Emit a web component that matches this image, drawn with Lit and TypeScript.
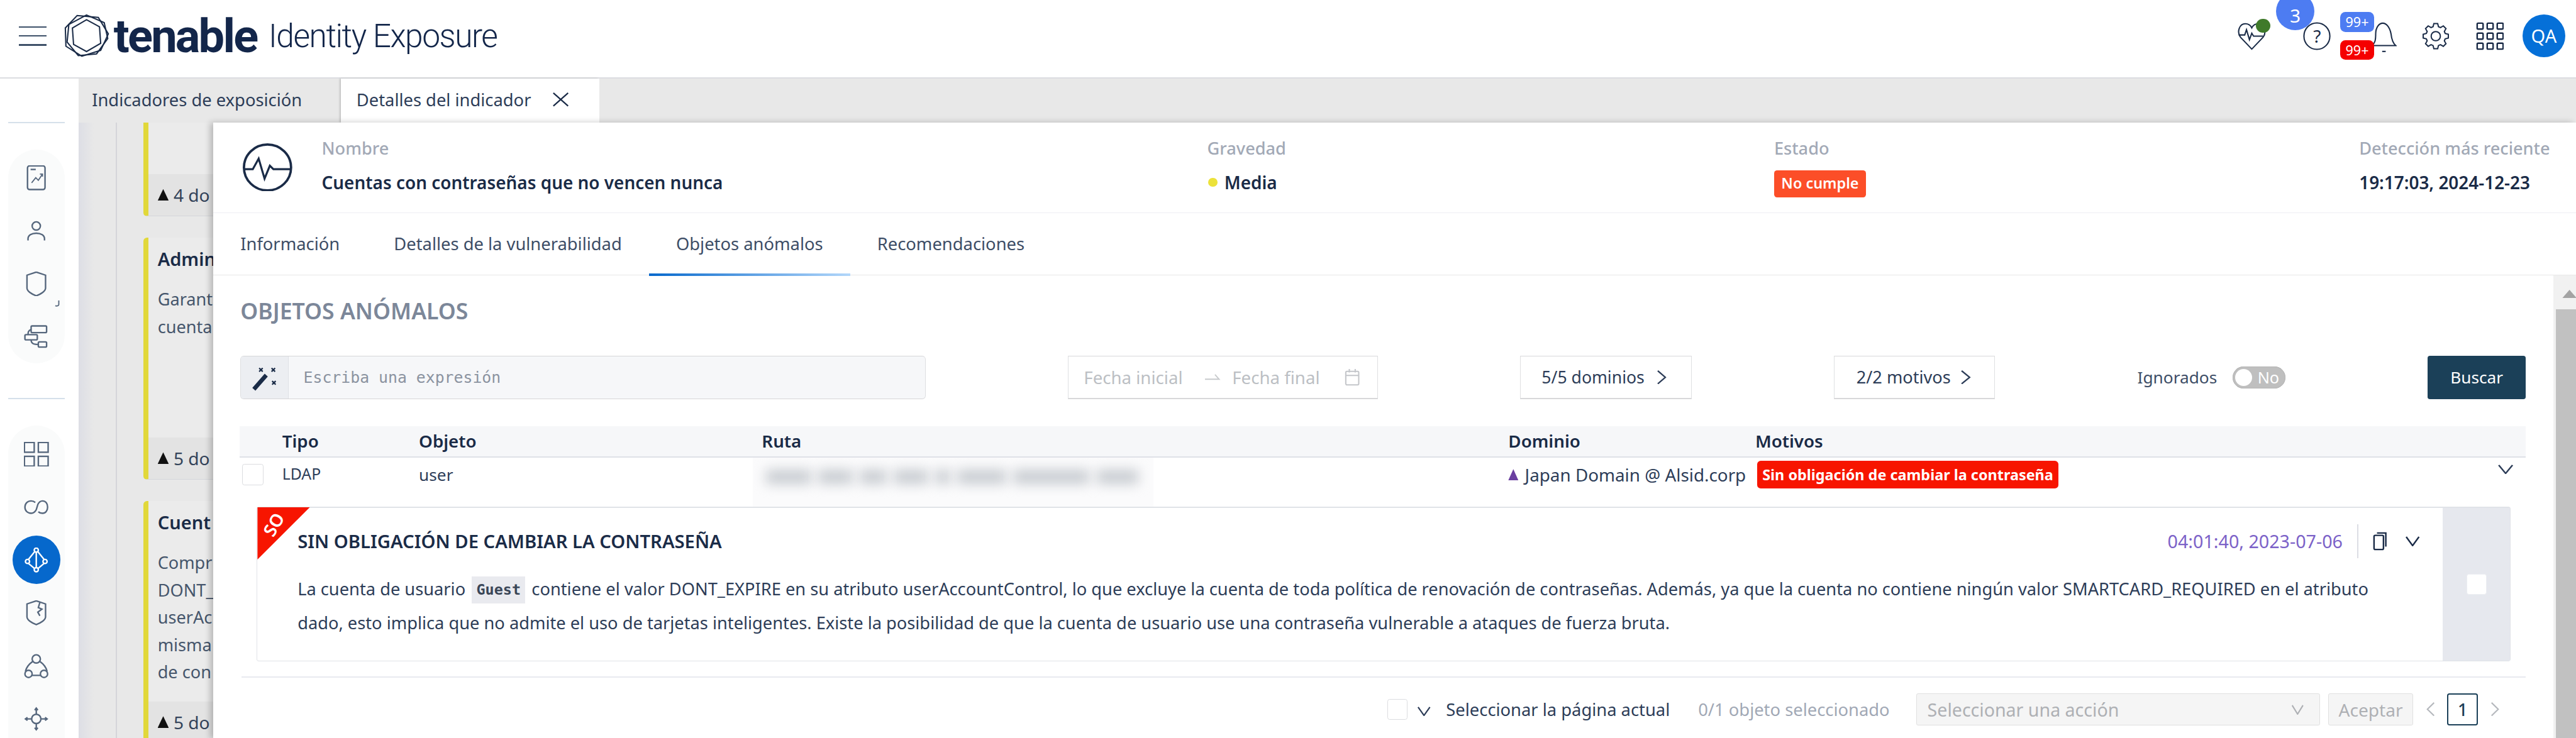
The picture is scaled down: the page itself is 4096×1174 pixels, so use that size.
import { LitElement, html, css, svg } from "lit";
import { customElement } from "lit/decorators.js";

const gearPath = (() => {
  const n = 8, cx = 24, cy = 24, R = 22, r = 17;
  const pts: string[] = [];
  for (let i = 0; i < n; i++) {
    const a = (i / n) * Math.PI * 2;
    const w = Math.PI / n;
    const p = (rad: number, t: number) => `${(cx + rad * Math.cos(t)).toFixed(1)} ${(cy + rad * Math.sin(t)).toFixed(1)}`;
    pts.push(p(r, a - w * 0.72), p(R, a - w * 0.38), p(R, a + w * 0.38), p(r, a + w * 0.72));
  }
  return "M" + pts.join("L") + "Z";
})();

const chev = (w: number, h: number, cls = "") =>
  html`<svg class=${cls} width=${w} height=${h} viewBox="0 0 24 16" preserveAspectRatio="none" fill="none" stroke="currentColor" stroke-width="2.4"><path d="M2 1l10 14L22 1" /></svg>`;
const right = (w: number, h: number) =>
  html`<svg width=${w} height=${h} viewBox="0 0 16 24" preserveAspectRatio="none" fill="none" stroke="currentColor" stroke-width="2.4"><path d="M2 1l12 11L2 23" /></svg>`;
const left = (w: number, h: number) =>
  html`<svg width=${w} height=${h} viewBox="0 0 16 24" preserveAspectRatio="none" fill="none" stroke="currentColor" stroke-width="2.4"><path d="M14 1L2 12l12 11" /></svg>`;

const sideIcons = [
  svg`<rect x="7" y="1" width="34" height="46" rx="4"/><path d="M13 8h10"/><path d="M15 34l8-10 5 5 8-12M31 17h5v5" stroke-width="2.2"/>`,
  svg`<circle cx="24" cy="14" r="8"/><path d="M8 42v-3c0-7 7-11 16-11s16 4 16 11v3"/>`,
  svg`<path d="M24 1l18 6v25c0 6-9 12-18 15C15 44 6 38 6 32V7z"/>`,
  svg`<rect x="14" y="3" width="30" height="13" rx="2"/><rect x="2" y="20" width="24" height="10" rx="2"/><rect x="28" y="34" width="16" height="10" rx="2"/><path d="M14 10C8 12 8 16 8 20M14 30c0 8 6 9 14 9"/>`,
  svg`<rect x="1" y="1" width="19" height="19"/><rect x="28" y="1" width="19" height="19"/><rect x="1" y="28" width="19" height="19"/><rect x="28" y="28" width="19" height="19"/>`,
  svg`<path d="M22 15c-2-2-5-3-8-3C7 12 2 17 2 24s5 12 12 12c5 0 8-3 10-7l3-10c2-4 4-7 9-7 6 0 10 5 10 12s-4 12-10 12c-3 0-6-1-8-3"/>`,
  svg`<circle cx="24" cy="5" r="4"/><circle cx="7" cy="27" r="4"/><circle cx="41" cy="27" r="4"/><circle cx="24" cy="43" r="4"/><path d="M21 8L9 23M27 8l12 15M9 31l12 10M39 31L27 41M24 9v30"/>`,
  svg`<path d="M24 1l18 6v25c0 6-9 12-18 15C15 44 6 38 6 32V7z"/><path d="M31 4l-3 10 7 3-8 6 4 7"/>`,
  svg`<circle cx="24" cy="10" r="8"/><circle cx="9" cy="39" r="7"/><circle cx="39" cy="39" r="7"/><path d="M17 15C10 20 5 26 3 34M31 15c7 5 12 11 14 19M16 42h16"/>`,
  svg`<circle cx="24" cy="24" r="9"/><path d="M24 3v12M24 33v12M3 24h12M33 24h12"/><path d="M21 7l3-4 3 4M21 41l3 4 3-4M7 21l-4 3 4 3M41 21l4 3-4 3"/>`,
];

const sideIcon = (i: number, active = false) => html`
  <span class="sic ${active ? "active" : ""}">
    <svg width="42" height="42" viewBox="0 0 48 48" fill="none" stroke="currentColor" stroke-width="2.9">${sideIcons[i]}</svg>
  </span>`;

@customElement("app-root")
export class AppRoot extends LitElement {
  static styles = css`
    :host { display: block; width: 4096px; height: 1174px; overflow: hidden; background: #fff; }
    * { box-sizing: border-box; }
    .page {
      zoom: 0.93687; width: 4372px; height: 1254px; display: flex; flex-direction: column; overflow: hidden;
      font-family: "Noto Sans", "Open Sans", sans-serif; font-size: 28px; color: #1a2b47; background: #fff;
    }
    .top { height: 133px; flex: none; display: flex; align-items: center; border-bottom: 3px solid #dcdde1; padding: 0 18px 9px 32px; overflow: hidden; }
    .burger { width: 47px; height: 33px; display: flex; flex-direction: column; justify-content: space-between; }
    .burger i { display: block; height: 3px; background: #3d5068; }
    .logo { margin-left: 30px; flex: none; display: block; }
    .brand { margin-left: 7px; font-family: "Roboto", sans-serif; font-weight: 700; font-size: 79px; letter-spacing: -3px; color: #13264a; line-height: 90px; margin-top: 2px; }
    .brand-sub { margin-left: 20px; font-family: "Roboto", sans-serif; font-weight: 300; font-size: 55px; letter-spacing: -1.6px; color: #13264a; line-height: 90px; margin-top: 2px; }
    .actions { margin-left: auto; display: flex; align-items: center; }
    .act { position: relative; display: block; height: 48px; flex: none; }
    .act svg { display: block; }
    .m-help { margin-left: 63px; }
    .m-bell { margin-left: 68px; }
    .m-gear { margin-left: 43px; }
    .m-apps { margin-left: 44px; }
    .dot { position: absolute; left: 31px; top: -5px; width: 24px; height: 24px; border-radius: 50%; background: #3f7a2a; }
    .count { position: absolute; left: -46px; top: -50px; width: 65px; height: 64px; border-radius: 50%; background: #4d7cf2; color: #fff; display: flex; align-items: center; justify-content: center; font-size: 32px; padding-top: 14px; }
    .help-q { position: absolute; inset: 0; display: flex; align-items: center; justify-content: center; font-size: 30px; color: #1a2b47; }
    .nb { position: absolute; left: -52px; width: 57px; height: 34px; border-radius: 9px; color: #fff; font-size: 23px; display: flex; align-items: center; justify-content: center; }
    .nb.blue { top: -17px; background: #4d7cf2; }
    .nb.red { top: 31px; background: #f50000; }
    .avatar { margin-left: 32px; width: 73px; height: 73px; border-radius: 50%; background: #0570d8; color: #fff; display: flex; align-items: center; justify-content: center; font-size: 31px; }

    .main { flex: 1; display: flex; min-height: 0; }
    .side { width: 133px; flex: none; padding: 74px 23px 0 14px; display: flex; flex-direction: column; overflow: hidden; }
    .rule { height: 2px; flex: none; background: #d5e0ea; }
    .pill { position: relative; flex: none; background: #fafbfb; border-radius: 48px; padding-top: 3px; margin-top: 45px; display: grid; grid-auto-rows: 90px; justify-items: center; align-items: center; }
    .pill.one { margin-bottom: 59px; }
    .pill.two { border-radius: 48px 48px 0 0; padding-bottom: 40px; }
    .sic { width: 82px; height: 82px; display: flex; align-items: center; justify-content: center; color: #56677d; border-radius: 50%; }
    .sic.active { background: #0668cc; color: #fff; }
    .corner { position: absolute; left: 78px; top: 255px; }

    .content { flex: 1; min-width: 0; position: relative; display: flex; flex-direction: column; }
    .tabbar { height: 75px; flex: none; background: #e8e8e8; display: flex; }
    .ttab { display: flex; align-items: center; padding-bottom: 3px; white-space: nowrap; font-size: 29.2px; color: #2d3d58; }
    .ttab.off { width: 446px; padding-left: 23px; }
    .ttab.on { width: 438px; padding-left: 26px; background: #fff; box-shadow: -2px 0 3px rgba(0,0,0,.18); }
    .ttab.on svg { margin-left: 36px; }
    .behind {
      flex: 1; min-height: 0; overflow: hidden; padding-left: 110px; display: flex; flex-direction: column; gap: 37px;
      background: linear-gradient(90deg, transparent 63px, #d5d5da 63px, #d5d5da 65px, transparent 65px), linear-gradient(90deg, #dddee5, #e8e8e8 26px);
    }
    .bcard { flex: none; width: 300px; border-left: 9px solid #e1d83a; border-radius: 6px; background: #ebebeb; display: flex; flex-direction: column; font-size: 29px; color: #46566c; border-bottom: 2px solid #d4d6da; overflow: hidden; }
    .b-a { height: 159px; justify-content: flex-end; border-radius: 0 0 6px 6px; }
    .b-b { height: 410px; }
    .b-c { height: 410px; border-bottom: 0; }
    .bbody { flex: 1; padding: 17px 0 0 16px; white-space: nowrap; display: flex; flex-direction: column; }
    .btitle { font-weight: 600; color: #1a2b47; font-size: 31px; line-height: 40px; margin-bottom: 24px; }
    .bline { line-height: 46.5px; }
    .bfoot { height: 70px; flex: none; padding-left: 16px; display: flex; align-items: center; background: #e3e3e3; white-space: nowrap; color: #33435a; font-size: 30px; }
    .tri { width: 19px; height: 20px; background: #111; clip-path: polygon(50% 0, 100% 100%, 0 100%); margin-right: 8px; flex: none; }

    .drawer { position: absolute; left: 229px; right: 0; top: 75px; bottom: 0; background: #fff; box-shadow: -5px 0 10px rgba(0,0,0,.22); display: flex; flex-direction: column; }
    .dhead { height: 154px; flex: none; border-bottom: 2px solid #eeeef3; padding-top: 26px; display: grid; grid-template-columns: 184px 1503px 962px 993px 1fr; }
    .dicon { padding: 9px 0 0 50px; }
    .lab { font-weight: 500; color: #a2a9b6; line-height: 36px; margin-bottom: 22px; font-size: 29px; white-space: nowrap; }
    .val { font-weight: 600; color: #1a2b47; line-height: 36px; height: 36px; font-size: 29.8px; display: flex; align-items: center; white-space: nowrap; }
    .ydot { width: 15px; height: 15px; border-radius: 50%; background: #ece23a; margin: 0 12px 0 2px; }
    .status { width: 156px; height: 46px; margin-top: 4px; border-radius: 5px; background: #fc4e28; color: #fff; display: flex; align-items: center; justify-content: center; font-size: 25px; font-weight: 600; }
    .dtabs { height: 106px; flex: none; display: flex; border-bottom: 2px solid #e8e8e8; font-size: 29.2px; color: #3d4d66; }
    .dtab { display: flex; align-items: center; padding: 0 46px 0; white-space: nowrap; margin-bottom: -2px; border-bottom: 5px solid transparent; }
    .dtab.on { border-image: linear-gradient(90deg, #0668cc, #b3d7fa) 1; }
    .dmain { flex: 1; min-height: 0; display: flex; }
    .dscroll { flex: 1; min-width: 0; padding: 40px 47px 0 46px; display: flex; flex-direction: column; }
    .bar { width: 38px; flex: none; display: flex; flex-direction: column; background: #f1f1f1; overflow: hidden; }
    .bar-up { height: 57px; flex: none; padding: 24px 0 0 15px; }
    .bar-up i { display: block; width: 24px; height: 14px; background: #a3a3a3; clip-path: polygon(50% 0, 100% 100%, 0 100%); }
    .bar-thumb { flex: 1; background: #c1c1c1; margin-left: 4px; }
    h2 { margin: 0; font-size: 38px; line-height: 40px; font-weight: 600; color: #7c8799; white-space: nowrap; }
    .filters { margin-top: 56px; height: 74px; flex: none; display: flex; justify-content: space-between; align-items: stretch; }
    .expr { width: 1163px; display: flex; border: 1px solid #dedfe2; border-top: 2px solid #d6d6d8; border-bottom: 2px solid #d6d6d8; border-radius: 6px; background: #f6f7f9; overflow: hidden; }
    .wand { width: 81px; flex: none; background: #eceef2; display: flex; align-items: center; justify-content: center; border-right: 1px solid #dfe1e6; }
    .ph { margin-left: 25px; align-self: center; font-family: "DejaVu Sans Mono", "Liberation Mono", monospace; font-size: 26.5px; color: #8b93a0; white-space: nowrap; }
    .fbox { border: 1px solid #dfe0e2; border-top: 2px solid #d8d8da; border-bottom: 3px solid #d8d8da; display: flex; align-items: center; justify-content: center; white-space: nowrap; background: #fff; }
    .dates { width: 526px; justify-content: flex-start; padding-left: 26px; color: #bcbfc4; font-size: 29.5px; }
    .dates svg { flex: none; }
    .dom { width: 291px; gap: 20px; color: #2d3d58; padding-right: 6px; font-size: 28.4px; }
    .mot { width: 274px; gap: 16px; color: #2d3d58; font-size: 29px; padding-right: 3px; }
    .ign { display: flex; align-items: center; gap: 24px; width: 251px; color: #3d4d66; white-space: nowrap; }
    .switch { width: 89px; height: 37px; flex: none; border-radius: 19px; background: #bfbfbf; display: flex; align-items: center; padding-left: 4px; color: #fff; font-size: 27px; box-shadow: inset 0 0 0 1px #b5b5b5; margin-left: auto; }
    .knob { width: 29px; height: 29px; border-radius: 50%; background: #fff; margin-right: 9px; flex: none; }
    .search { width: 167px; border-radius: 4px; background: #1b4058; color: #fff; display: flex; align-items: center; justify-content: center; }

    .cols { display: grid; grid-template-columns: 72px 232px 582px 1267px 419px 1fr; }
    .thead { margin: 46px 0 0 -1px; height: 53px; flex: none; background: #f6f7f9; border-bottom: 3px solid #dfe1e8; align-items: center; font-weight: 600; font-size: 29.6px; color: #1a2b47; padding-bottom: 3px; }
    .trow { margin-left: -1px; height: 83px; flex: none; align-items: center; padding-bottom: 25px; color: #2d3d58; white-space: nowrap; }
    .cb { width: 36px; height: 36px; flex: none; background: #fff; border: 2px solid #dcdde0; border-radius: 4px; display: block; }
    .c0 { padding-left: 4px; }
    .ldap { margin-top: -4px; font-size: 26.5px; }
    .blur { align-self: stretch; margin: 0 0 -25px -15px; width: 680px; background: #fbfbfc; display: flex; align-items: center; gap: 12px; padding: 0 26px 18px 22px; overflow: hidden; }
    .blur i { display: block; height: 24px; background: #c8ccd1; filter: blur(10px); }
    .blur i:nth-child(1) { flex: 61; }
    .blur i:nth-child(2) { flex: 46; }
    .blur i:nth-child(3) { flex: 36; }
    .blur i:nth-child(4) { flex: 46; }
    .blur i:nth-child(5) { flex: 20; }
    .blur i:nth-child(6) { flex: 66; }
    .blur i:nth-child(7) { flex: 102; }
    .blur i:nth-child(8) { flex: 56; }
    .domc { display: flex; align-items: center; gap: 11px; font-size: 29.7px; }
    .ptri { width: 17px; height: 19px; background: #6a3fa0; clip-path: polygon(50% 0, 100% 100%, 0 100%); flex: none; }
    .mc { display: flex; align-items: center; justify-content: space-between; padding: 0 20px 0 3px; }
    .rbadge { width: 512px; height: 46px; border-radius: 6px; background: #f71500; color: #fff; display: flex; align-items: center; justify-content: center; font-size: 25px; font-weight: 700; white-space: nowrap; }
    .mc svg { margin-bottom: 18px; color: #2d3d58; }
    .card { position: relative; height: 263px; flex: none; margin: 0 26px 0 28px; border: 1px solid #e0e3e8; border-top: 3px solid #e0e3e8; border-bottom: 2px solid #dfe2e7; border-radius: 4px; display: flex; }
    .cmain { flex: 1; min-width: 0; padding: 32px 38px 0 68px; }
    .ctitle { height: 50px; display: flex; align-items: center; }
    .ctitle b { font-weight: 600; font-size: 31.2px; color: #1a2b47; white-space: nowrap; }
    .when { margin-left: auto; color: #7c62c8; font-size: 30.6px; white-space: nowrap; }
    .vsep { width: 2px; height: 57px; background: #dcdde4; margin: 0 24px 0 25px; flex: none; }
    .copy { flex: none; margin-right: 31px; }
    .cdesc { margin-top: 28px; line-height: 55px; font-size: 29.1px; color: #2d3d58; white-space: nowrap; }
    code { font-family: "DejaVu Sans Mono", "Liberation Mono", monospace; font-size: 25px; font-weight: 700; background: #e9eaef; color: #3a4657; padding: 8px 8px; margin: 0 3px; }
    .cside { width: 114px; flex: none; background: #e6e8ee; display: flex; align-items: center; justify-content: center; }
    .cside .cb { width: 34px; height: 35px; border-color: #eceef2; }
    .ribbon { position: absolute; left: 0; top: -1px; width: 89px; height: 89px; background: #f71500; clip-path: polygon(0 0, 100% 0, 0 100%); }
    .ribbon span { display: block; position: absolute; left: 7px; top: 14px; color: #fff; font-size: 30px; font-weight: 600; transform: rotate(-60deg); line-height: 30px; }
    .dline { margin: 26px 0 0 2px; height: 2px; flex: none; background: #e8eaef; }
    .foot { margin-top: 27px; height: 54px; flex: none; display: flex; align-items: center; justify-content: flex-end; white-space: nowrap; padding-right: 45px; font-size: 29.2px; }
    .foot .cb { width: 35px; height: 35px; }
    .foot .fc { margin-left: 16px; color: #2d3d58; flex: none; }
    .sel-txt { margin-left: 25px; color: #2d3d58; }
    .sel-n { margin-left: 48px; color: #a1a8b5; }
    .sel { margin-left: 45px; width: 686px; height: 54px; background: #f5f5f5; border: 2px solid #e0e0e0; border-radius: 3px; display: flex; align-items: center; justify-content: space-between; padding: 0 26px 0 18px; color: #aeb0b4; font-size: 30.5px; }
    .ok { margin-left: 13px; width: 145px; height: 54px; background: #f5f5f5; border: 2px solid #e0e0e0; border-radius: 3px; display: flex; align-items: center; justify-content: center; color: #aeb0b4; font-size: 30px; }
    .pg { color: #b5b8bd; flex: none; }
    .pg.p1 { margin-left: 22px; }
    .pg.p2 { margin-left: 21px; }
    .pnum { margin-left: 20px; width: 53px; height: 54px; border: 3px solid #1b4058; border-radius: 4px; display: flex; align-items: center; justify-content: center; color: #1b4058; font-size: 29px; font-weight: 500; }
  `;

  render() {
    return html`<div class="page">
      <header class="top">
        <span class="burger"><i></i><i></i><i></i></span>
        <svg class="logo" width="77" height="74" viewBox="0 0 77 74" fill="none" stroke="#1a2b47" stroke-width="2.2">
          <polygon points="38,2 68,15 74,42 55,68 24,71 5,48 8,18" />
          <polygon points="22,3 58,6 75,34 62,62 30,72 3,55 2,24" />
          <polygon points="38,10 60,22 62,50 38,64 16,52 14,24" />
        </svg>
        <span class="brand">tenable</span>
        <span class="brand-sub">Identity Exposure</span>
        <div class="actions">
          <span class="act" style="width:48px">
            <svg width="48" height="48" viewBox="0 0 48 48" fill="none" stroke="#1a2b47" stroke-width="2.2"><path d="M24 46L5 26C-2 17 3 3 13 3c5 0 9 3 11 7 2-4 6-7 11-7 10 0 15 14 8 23z"/><path d="M2 22h10l3-9 5 17 4-11 3 5h16"/></svg>
            <i class="dot"></i>
          </span>
          <span class="act m-help" style="width:47px">
            <span class="count">3</span>
            <svg width="47" height="48" viewBox="0 0 47 48" fill="none" stroke="#1a2b47" stroke-width="2.2"><ellipse cx="23.5" cy="24" rx="22" ry="22.5"/></svg>
            <span class="help-q">?</span>
          </span>
          <span class="act m-bell" style="width:44px">
            <svg width="44" height="52" viewBox="0 0 44 52" fill="none" stroke="#1a2b47" stroke-width="2.2"><path d="M2 40c5-5 6-9 6-20C8 9 14 2 20 2s12 7 14 18c1 9 3 16 8 20z"/><path d="M19 50h6"/></svg>
            <span class="nb blue">99+</span>
            <span class="nb red">99+</span>
          </span>
          <span class="act m-gear" style="width:47px">
            <svg width="47" height="48" viewBox="0 0 48 48" fill="none" stroke="#1a2b47" stroke-width="2.2"><path d=${gearPath}/><circle cx="24" cy="24" r="8"/></svg>
          </span>
          <span class="act m-apps" style="width:47px">
            <svg width="47" height="48" viewBox="0 0 47 48" fill="none" stroke="#1a2b47" stroke-width="2.6">
              ${[2, 19, 36].flatMap((y) => [2, 19, 36].map((x) => svg`<rect x=${x} y=${y} width="10" height="10" rx="1.5"/>`))}
            </svg>
          </span>
          <span class="avatar">QA</span>
        </div>
      </header>
      <div class="main">
        <aside class="side">
          <div class="rule"></div>
          <div class="pill one">
            ${sideIcon(0)}${sideIcon(1)}${sideIcon(2)}${sideIcon(3)}
            <svg class="corner" width="10" height="12" viewBox="0 0 10 12" fill="none" stroke="#56677d" stroke-width="2"><path d="M8 1v7c0 2-3 3-6 2"/></svg>
          </div>
          <div class="rule"></div>
          <div class="pill two">
            ${sideIcon(4)}${sideIcon(5)}${sideIcon(6, true)}${sideIcon(7)}${sideIcon(8)}${sideIcon(9)}
          </div>
        </aside>
        <div class="content">
          <div class="tabbar">
            <div class="ttab off">Indicadores de exposición</div>
            <div class="ttab on">Detalles del indicador
              <svg width="29" height="24" viewBox="0 0 29 24" fill="none" stroke="#1a2b47" stroke-width="2.4"><path d="M2 1l25 22M27 1L2 23"/></svg>
            </div>
          </div>
          <div class="behind">
            <div class="bcard b-a"><div class="bfoot"><i class="tri"></i>4 do</div></div>
            <div class="bcard b-b">
              <div class="bbody"><div class="btitle">Admin</div><div class="bline">Garant</div><div class="bline">cuenta</div></div>
              <div class="bfoot"><i class="tri"></i>5 do</div>
            </div>
            <div class="bcard b-c">
              <div class="bbody"><div class="btitle">Cuent</div><div class="bline">Compr</div><div class="bline">DONT_</div><div class="bline">userAc</div><div class="bline">misma</div><div class="bline">de con</div></div>
              <div class="bfoot"><i class="tri"></i>5 do</div>
            </div>
          </div>
          <section class="drawer">
            <div class="dhead">
              <div class="dicon">
                <svg width="84" height="82" viewBox="0 0 84 82" fill="none" stroke="#1a2b47" stroke-width="4"><ellipse cx="42" cy="41" rx="40" ry="39"/><path d="M3 44h14l10-18 10 34 9-22 6 6h30" stroke-width="3.4"/></svg>
              </div>
              <div><div class="lab">Nombre</div><div class="val">Cuentas con contraseñas que no vencen nunca</div></div>
              <div><div class="lab">Gravedad</div><div class="val"><i class="ydot"></i>Media</div></div>
              <div><div class="lab">Estado</div><div class="val"><span class="status">No cumple</span></div></div>
              <div><div class="lab">Detección más reciente</div><div class="val">19:17:03, 2024-12-23</div></div>
            </div>
            <div class="dtabs">
              <div class="dtab">Información</div>
              <div class="dtab">Detalles de la vulnerabilidad</div>
              <div class="dtab on">Objetos anómalos</div>
              <div class="dtab">Recomendaciones</div>
            </div>
            <div class="dmain">
              <div class="dscroll">
                <h2>OBJETOS ANÓMALOS</h2>
                <div class="filters">
                  <div class="expr">
                    <span class="wand">
                      <svg width="46" height="48" viewBox="0 0 46 48" fill="none" stroke="#1a2b47"><path d="M5 44L26 20" stroke-width="7"/><path d="M14 8l6 6M20 8l-6 6M35 8l6 6M41 8l-6 6M36 30l6 6M42 30l-6 6" stroke-width="2.4"/></svg>
                    </span>
                    <span class="ph">Escriba una expresión</span>
                  </div>
                  <div class="fbox dates">
                    <span>Fecha inicial</span>
                    <svg style="margin:0 20px 0 38px" width="26" height="14" viewBox="0 0 26 14" fill="none" stroke="#c8cacd" stroke-width="2"><path d="M0 11h24l-7-8"/></svg>
                    <span>Fecha final</span>
                    <svg style="margin-left:42px" width="26" height="30" viewBox="0 0 26 30" fill="none" stroke="#c4c6ca" stroke-width="2.2"><rect x="2" y="5" width="22" height="23" rx="2"/><path d="M2 12h22M8 1v6M18 1v6"/></svg>
                  </div>
                  <div class="fbox dom"><span>5/5 dominios</span>${right(17, 24)}</div>
                  <div class="fbox mot"><span>2/2 motivos</span>${right(18, 24)}</div>
                  <div class="ign">Ignorados<span class="switch"><i class="knob"></i>No</span></div>
                  <div class="search">Buscar</div>
                </div>
                <div class="cols thead"><span></span><span>Tipo</span><span>Objeto</span><span>Ruta</span><span>Dominio</span><span>Motivos</span></div>
                <div class="cols trow">
                  <div class="c0"><i class="cb"></i></div>
                  <span class="ldap">LDAP</span>
                  <span>user</span>
                  <div class="blur"><i></i><i></i><i></i><i></i><i></i><i></i><i></i><i></i></div>
                  <div class="domc"><i class="ptri"></i>Japan Domain @ Alsid.corp</div>
                  <div class="mc"><span class="rbadge">Sin obligación de cambiar la contraseña</span>${chev(28, 16)}</div>
                </div>
                <div class="card">
                  <div class="cmain">
                    <div class="ctitle">
                      <b>SIN OBLIGACIÓN DE CAMBIAR LA CONTRASEÑA</b>
                      <span class="when">04:01:40, 2023-07-06</span>
                      <i class="vsep"></i>
                      <svg class="copy" width="24" height="32" viewBox="0 0 24 32" fill="none" stroke="#1a2b47" stroke-width="2.6"><rect x="2" y="6" width="16" height="24" rx="2"/><path d="M7 2h15v23"/></svg>
                      ${chev(26, 17)}
                    </div>
                    <div class="cdesc">La cuenta de usuario <code>Guest</code> contiene el valor DONT_EXPIRE en su atributo userAccountControl, lo que excluye la cuenta de toda política de renovación de contraseñas. Además, ya que la cuenta no contiene ningún valor SMARTCARD_REQUIRED en el atributo<br />dado, esto implica que no admite el uso de tarjetas inteligentes. Existe la posibilidad de que la cuenta de usuario use una contraseña vulnerable a ataques de fuerza bruta.</div>
                  </div>
                  <div class="cside"><i class="cb"></i></div>
                  <div class="ribbon"><span>SO</span></div>
                </div>
                <div class="dline"></div>
                <div class="foot">
                  <i class="cb"></i>
                  <span class="fc">${chev(24, 16)}</span>
                  <span class="sel-txt">Seleccionar la página actual</span>
                  <span class="sel-n">0/1 objeto seleccionado</span>
                  <div class="sel"><span>Seleccionar una acción</span>${chev(22, 17)}</div>
                  <div class="ok">Aceptar</div>
                  <span class="pg p1">${left(15, 24)}</span>
                  <span class="pnum">1</span>
                  <span class="pg p2">${right(15, 24)}</span>
                </div>
              </div>
              <div class="bar"><div class="bar-up"><i></i></div><div class="bar-thumb"></div></div>
            </div>
          </section>
        </div>
      </div>
    </div>`;
  }
}
